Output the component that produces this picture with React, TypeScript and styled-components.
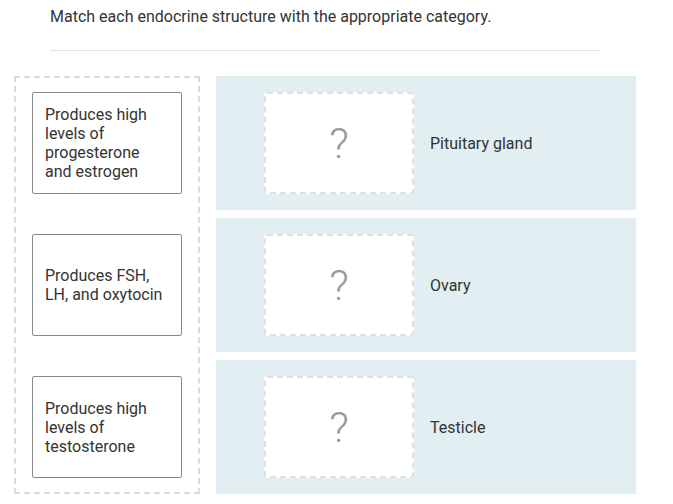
import React from "react";
import styled, { createGlobalStyle } from "styled-components";

const Global = createGlobalStyle`
  html, body { margin: 0; padding: 0; background: #fff; }
  body { font-family: Roboto, "Liberation Sans", Arial, sans-serif; color: #333; }
`;

const Page = styled.div`
  padding: 0 0 0 14px;
  width: 673px;
  box-sizing: border-box;
`;

const Prompt = styled.div`
  margin: 0 0 0 36px;
  padding-top: 7px;
  font-size: 16px;
  line-height: 20px;
  color: #333;
`;

const Rule = styled.hr`
  margin: 23px 0 0 36px;
  width: 550px;
  border: 0;
  border-top: 1px solid #e3e3e3;
  height: 0;
`;

const Board = styled.div`
  display: flex;
  gap: 16px;
  margin-top: 25px;
  align-items: flex-start;
`;

const Source = styled.div`
  width: 186px;
  height: 418px;
  box-sizing: border-box;
  border: 2px dashed #dadada;
  padding: 14px 16px;
  display: flex;
  flex-direction: column;
  gap: 40px;
`;

const Card = styled.div`
  width: 150px;
  height: 102px;
  box-sizing: border-box;
  border: 1px solid #8a8a8a;
  border-radius: 2px;
  background: #fff;
  padding: 0 12px;
  display: flex;
  align-items: center;
  font-size: 16px;
  line-height: 19px;
  color: #333;
`;

const Targets = styled.div`
  display: flex;
  flex-direction: column;
  gap: 8px;
`;

const Row = styled.div`
  width: 420px;
  height: 134px;
  box-sizing: border-box;
  background: #e1eef2;
  padding: 16px 0 16px 48px;
  display: flex;
  align-items: center;
  gap: 16px;
`;

const Drop = styled.div`
  width: 150px;
  height: 102px;
  box-sizing: border-box;
  background: #fff;
  border: 2px dashed #e0e0e0;
  border-radius: 3px;
  display: flex;
  align-items: center;
  justify-content: center;
  font-size: 43px;
  color: #9a9a9a;
  font-weight: 300;
`;

const Label = styled.div`
  font-size: 16px;
  color: #333;
`;

const cards = [
  "Produces high levels of progesterone and estrogen",
  "Produces FSH, LH, and oxytocin",
  "Produces high levels of testosterone",
];
const labels = ["Pituitary gland", "Ovary", "Testicle"];

export default function App() {
  return (
    <Page>
      <Global />
      <Prompt>Match each endocrine structure with the appropriate category.</Prompt>
      <Rule />
      <Board>
        <Source>
          {cards.map((c) => (
            <Card key={c}>{c}</Card>
          ))}
        </Source>
        <Targets>
          {labels.map((l) => (
            <Row key={l}>
              <Drop>?</Drop>
              <Label>{l}</Label>
            </Row>
          ))}
        </Targets>
      </Board>
    </Page>
  );
}
